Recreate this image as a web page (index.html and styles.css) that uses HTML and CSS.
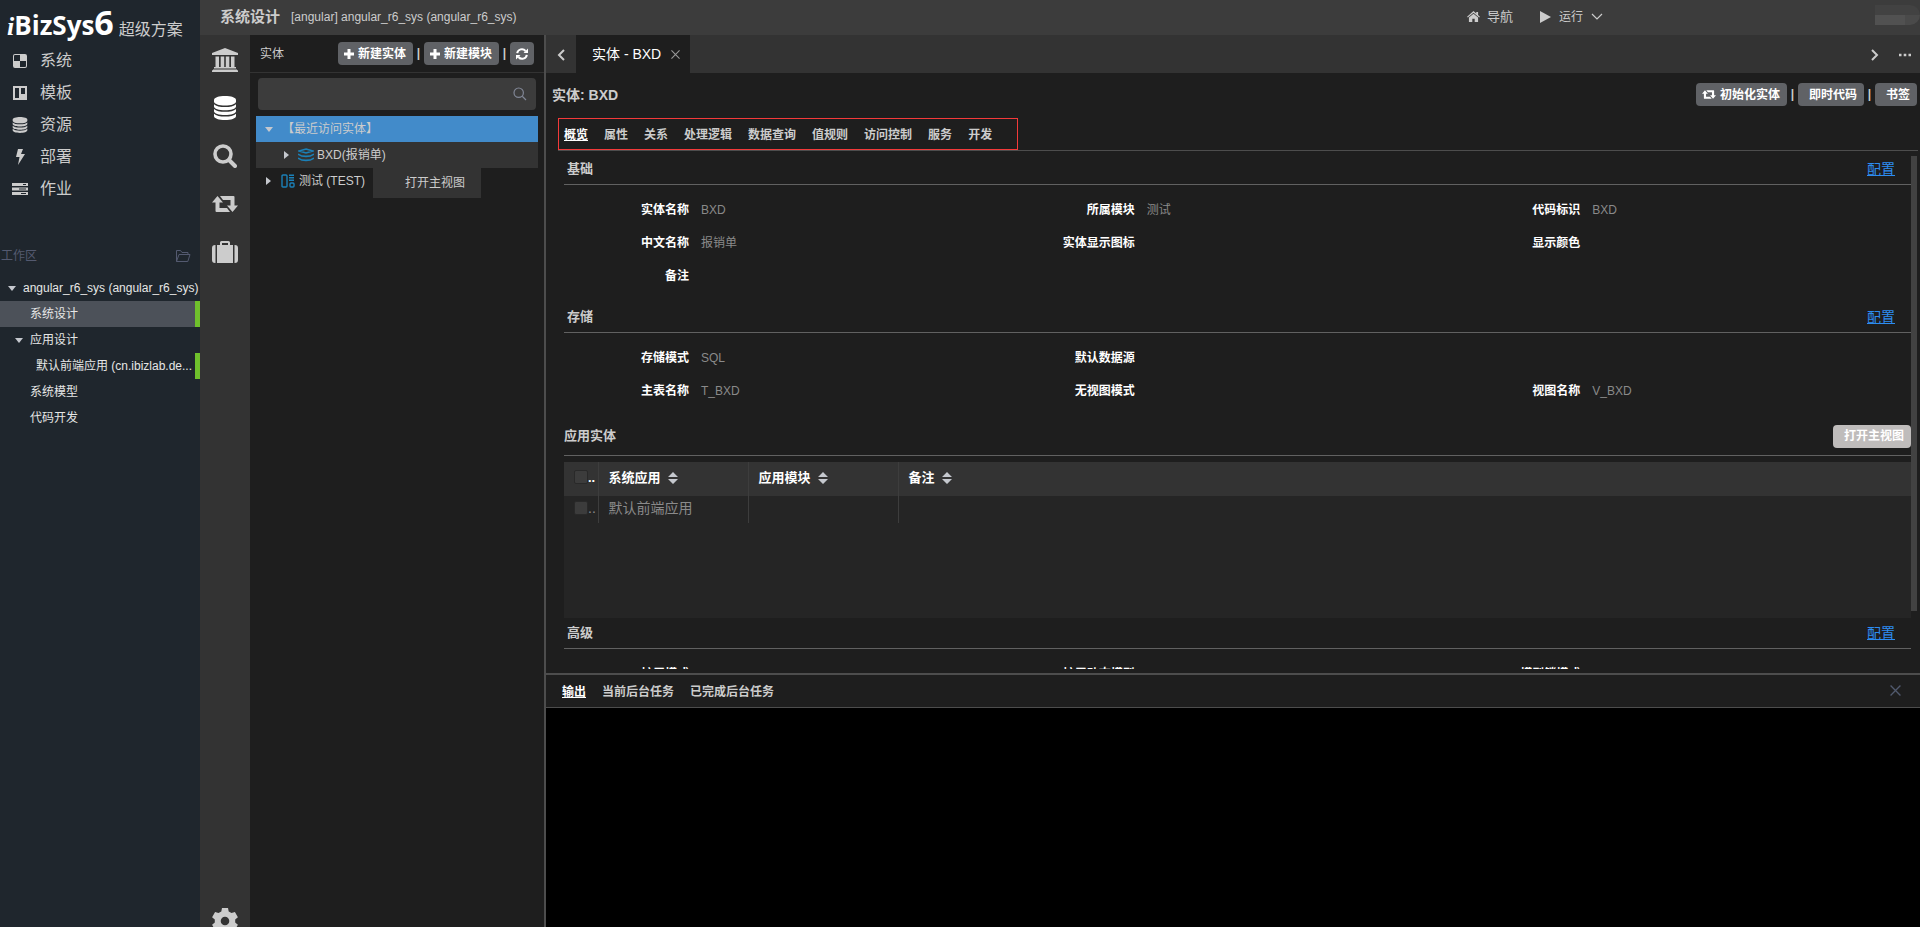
FILE: index.html
```html
<!DOCTYPE html>
<html lang="zh-CN">
<head>
<meta charset="utf-8">
<title>系统设计 - iBizSys6</title>
<link rel="stylesheet" href="styles.css">
</head>
<body>
<svg class="sprite" aria-hidden="true">
  <symbol id="retweet" viewBox="0 0 26 16"><path d="M5.5 0 11 6.500H7.500V12H15l3 4H4.500Q3.500 16 3.500 15V6.500H0ZM20.500 16 15 9.500h3.500V4H11L8 0h13.500q1 0 1 1v8.500H26Z"/></symbol>
  <symbol id="database" viewBox="0 0 22 24"><path d="M0 4C0 1.500 5 0 11 0s11 1.500 11 4v1.500C22 8 17 9.500 11 9.500S0 8 0 5.500Z"/><path d="M0 8.200c2 2 6 2.800 11 2.800s9-.8 11-2.800v2.300c0 2.400-5 3.800-11 3.800S0 12.900 0 10.500Z"/><path d="M0 13c2 2 6 2.800 11 2.800s9-.8 11-2.800v2.300c0 2.400-5 3.800-11 3.800S0 17.700 0 15.300Z"/><path d="M0 17.800c2 2 6 2.800 11 2.800s9-.8 11-2.800v2.200c0 2.500-5 4-11 4S0 22.500 0 20Z"/></symbol>
  <symbol id="plus" viewBox="0 0 10 10"><path d="M3.500 0h3v3.500H10v3H6.500V10h-3V6.500H0v-3h3.500Z"/></symbol>
  <symbol id="close" viewBox="0 0 10 10"><path d="m.5.5 9 9m0-9-9 9" fill="none" stroke="currentColor" stroke-width="1.200"/></symbol>
  <symbol id="sort" viewBox="0 0 10 12"><path d="M5 0 10 5H0ZM5 12 0 7h10Z"/></symbol>
</svg>
<div class="app">
  <aside class="sidebar">
    <div class="logo"><span class="logo-i">i</span><span class="logo-name">BizSys</span><span class="logo-six">6</span><span class="logo-edition">超级方案</span></div>
    <nav class="main-nav">
      <a href="#"><svg viewBox="0 0 16 16" width="16" height="16"><path fill-rule="evenodd" d="M3 1h10q2 0 2 2v10q0 2-2 2H3q-2 0-2-2V3q0-2 2-2Zm5 1H3Q2 2 2 3v5h6v6h5q1 0 1-1V8H8Z"/></svg>系统</a>
      <a href="#"><svg viewBox="0 0 16 16" width="16" height="16"><path fill-rule="evenodd" d="M1 1h14v14H1Zm2 2v10h4V3Zm6 0v6h4V3Z"/></svg>模板</a>
      <a href="#"><svg width="16" height="16"><use href="#database"/></svg>资源</a>
      <a href="#"><svg viewBox="0 0 16 16" width="16" height="16"><path d="M6 0h5L9 5h4L6 16l1.500-8H4Z"/></svg>部署</a>
      <a href="#"><svg viewBox="0 0 16 14" width="16" height="14"><path fill-rule="evenodd" d="M0 1h16v3H0Zm11 1v1h3V2ZM0 5.500h16v3H0Zm7 1v1h7v-1ZM0 10h16v3H0Zm9 1v1h5v-1Z"/></svg>作业</a>
    </nav>
    <div class="workspace-head"><span>工作区</span><svg viewBox="0 0 16 14" width="16" height="14"><path d="M1.500 12.500v-11h4l1.500 2h6v2M1.500 12.500 4 5.500h11l-2.200 7Z" fill="none" stroke="currentColor"/></svg></div>
    <ul class="ws-tree">
      <li class="root"><i class="caret-down"></i>angular_r6_sys (angular_r6_sys)</li>
      <li class="active marked">系统设计</li>
      <li class="open"><i class="caret-down"></i>应用设计</li>
      <li class="leaf marked"><span>默认前端应用 (cn.ibizlab.de...</span></li>
      <li>系统模型</li>
      <li>代码开发</li>
    </ul>
  </aside>
  <div class="workbench">
    <header class="topbar">
      <h1>系统设计</h1><span class="sys-name">[angular] angular_r6_sys (angular_r6_sys)</span>
      <nav class="top-nav">
        <a href="#"><svg viewBox="0 0 14 12" width="13" height="11"><path d="M7 0 10 2.600V1h2v3.400L14 6.200l-.8 1L7 1.900.8 7.200 0 6.200ZM7 3l5 4.200V12H8.300V8.500H5.700V12H2V7.200Z"/></svg>导航</a>
        <a href="#" class="run"><svg viewBox="0 0 12 12" width="12" height="12"><path d="M1 0 12 6 1 12Z"/></svg><span>运行</span><svg viewBox="0 0 12 8" width="12" height="8"><path d="m1 1 5 5 5-5" fill="none" stroke="currentColor" stroke-width="1.200"/></svg></a>
      </nav>
      <div class="user"><i></i><i></i><i></i><i></i><i></i><i></i></div>
    </header>
    <div class="body">
      <nav class="rail">
        <button aria-label="系统"><svg viewBox="0 0 26 24" width="26" height="24"><path d="M13 0 26 5v2H0V5ZM3.500 8.500H7V19h1.700V8.500h3.500V19h1.600V8.500h3.500V19H19V8.500h3.500V19H24v1.500H2V19h1.500ZM1 21.500h24V22l1 .5V24H0v-1.500l1-.5Z"/></svg></button>
        <button aria-label="实体" class="on"><svg width="22" height="24"><use href="#database"/></svg></button>
        <button aria-label="搜索"><svg viewBox="0 0 24 24" width="24" height="24"><g fill="none" stroke="currentColor"><circle cx="10" cy="10" r="8" stroke-width="3.600"/><path d="m16 16 6 6" stroke-width="4" stroke-linecap="round"/></g></svg></button>
        <button aria-label="转换"><svg width="26" height="16"><use href="#retweet"/></svg></button>
        <button aria-label="资源"><svg viewBox="0 0 26 22" width="26" height="22"><path fill-rule="evenodd" d="M3.500 4v18H3q-3 0-3-3V7q0-3 3-3ZM5 4h3V1.500Q8 0 9.500 0h7Q18 0 18 1.500V4h3v18H5Zm5 0h6V2h-6ZM22.500 4h.5q3 0 3 3v12q0 3-3 3h-.5Z"/></svg></button>
        <button aria-label="设置" class="gear"><svg viewBox="0 0 26 26" width="26" height="26"><path fill-rule="evenodd" d="M10 0h6l.7 3.500 2.800 1.600L22.900 4l3 5.200-2.700 2.300v3l2.700 2.300-3 5.200-3.400-1.100-2.800 1.600L16 26h-6l-.7-3.500-2.800-1.600L3.100 22l-3-5.200 2.700-2.300v-3L.1 9.200l3-5.200 3.400 1.100 2.800-1.600ZM13 8.700a4.300 4.300 0 1 0 0 8.600 4.300 4.300 0 0 0 0-8.600Z"/></svg></button>
      </nav>
      <section class="explorer">
        <div class="explorer-head">
          <span>实体</span>
          <div class="tools">
            <button class="btn"><svg width="10" height="10"><use href="#plus"/></svg>新建实体</button><span class="bar">|</span>
            <button class="btn"><svg width="10" height="10"><use href="#plus"/></svg>新建模块</button><span class="bar">|</span>
            <button class="btn icon-only" aria-label="刷新"><svg viewBox="0 0 12 12" width="12" height="12"><path d="M1.200 5.200A4.700 4.700 0 0 1 9.500 3M10.800 6.800A4.700 4.700 0 0 1 2.500 9" fill="none" stroke="currentColor" stroke-width="2"/><path d="M12 .5V5H7.500ZM0 11.500V7h4.500Z"/></svg></button>
          </div>
        </div>
        <label class="search"><input type="text" aria-label="搜索实体"><svg viewBox="0 0 14 14" width="14" height="14"><path d="M9.500 9.500 13 13M5.700 10.400a4.700 4.700 0 1 0 0-9.400 4.700 4.700 0 0 0 0 9.400Z" fill="none" stroke="currentColor" stroke-width="1.200"/></svg></label>
        <ul class="tree">
          <li class="recent"><i class="caret-down"></i><span>【最近访问实体】</span></li>
          <li class="hover"><i class="caret-right"></i><svg class="blue" viewBox="0 0 16 14" width="16" height="14"><path d="M8 1 15 3 8 5 1 3ZM0 6q3 2.400 8 2.400T16 6M0 10q3 2.400 8 2.400t8-2.400" fill="none" stroke="currentColor" stroke-width="1.600"/></svg><span>BXD(报销单)</span></li>
          <li><i class="caret-right"></i><svg class="blue" viewBox="0 0 14 14" width="14" height="14"><path d="M2 1h3q1 0 1 1v10q0 1-1 1H2q-1 0-1-1V2q0-1 1-1ZM8 1.200h5M8 3.700h5M8 6.200h5M10 9h2q1 0 1 1v2q0 1-1 1h-2q-1 0-1-1v-2q0-1 1-1Z" fill="none" stroke="currentColor" stroke-width="1.400"/></svg><span>测试 (TEST)</span></li>
        </ul>
        <div class="context-menu" role="menu"><a href="#" role="menuitem">打开主视图</a></div>
      </section>
      <main class="editor">
        <div class="tabbar">
          <button class="arrow" aria-label="向左"><svg viewBox="0 0 8 12" width="8" height="12"><path d="M7 1 2 6l5 5" fill="none" stroke="currentColor" stroke-width="2"/></svg></button>
          <div class="tab">实体 - BXD<button aria-label="关闭"><svg width="9" height="9"><use href="#close"/></svg></button></div>
          <div class="tab-actions">
            <button aria-label="向右"><svg viewBox="0 0 8 12" width="8" height="12"><path d="m1 1 5 5-5 5" fill="none" stroke="currentColor" stroke-width="2"/></svg></button>
            <button aria-label="更多"><svg viewBox="0 0 12 4" width="12" height="4"><path d="M0 .8h2.500v2.400H0ZM4.700.8h2.600v2.400H4.700ZM9.500.8H12v2.400H9.500Z"/></svg></button>
          </div>
        </div>
        <div class="title-row">
          <h2>实体: BXD</h2>
          <div class="tools">
            <button class="btn"><svg width="14" height="9"><use href="#retweet"/></svg>初始化实体</button><span class="bar">|</span>
            <button class="btn text">即时代码</button><span class="bar">|</span>
            <button class="btn text">书签</button>
          </div>
        </div>
        <div class="subtabs">
          <nav class="subtab-box">
            <a href="#" class="on">概览</a><a href="#">属性</a><a href="#">关系</a><a href="#">处理逻辑</a><a href="#">数据查询</a><a href="#">值规则</a><a href="#">访问控制</a><a href="#">服务</a><a href="#">开发</a>
          </nav>
        </div>
        <div class="scroll">
          <div class="content">
            <div class="section-head"><h3>基础</h3><a href="#">配置</a></div>
            <dl class="form">
              <div><dt>实体名称</dt><dd>BXD</dd></div><div><dt>所属模块</dt><dd>测试</dd></div><div><dt>代码标识</dt><dd>BXD</dd></div>
              <div><dt>中文名称</dt><dd>报销单</dd></div><div><dt>实体显示图标</dt><dd></dd></div><div><dt>显示颜色</dt><dd></dd></div>
              <div><dt>备注</dt><dd></dd></div>
            </dl>
            <div class="section-head"><h3>存储</h3><a href="#">配置</a></div>
            <dl class="form">
              <div><dt>存储模式</dt><dd>SQL</dd></div><div><dt>默认数据源</dt><dd></dd></div><div></div>
              <div><dt>主表名称</dt><dd>T_BXD</dd></div><div><dt>无视图模式</dt><dd></dd></div><div><dt>视图名称</dt><dd>V_BXD</dd></div>
            </dl>
            <div class="grid-head"><h3>应用实体</h3><button class="btn text light">打开主视图</button></div>
            <div class="grid">
              <table>
                <colgroup><col class="c-check"><col class="c-mid"><col class="c-mid"><col></colgroup>
                <thead><tr><th><input type="checkbox" aria-label="全选">..</th><th>系统应用<svg width="10" height="12"><use href="#sort"/></svg></th><th>应用模块<svg width="10" height="12"><use href="#sort"/></svg></th><th>备注<svg width="10" height="12"><use href="#sort"/></svg></th></tr></thead>
                <tbody><tr><td><input type="checkbox" aria-label="选择">..</td><td>默认前端应用</td><td></td><td></td></tr></tbody>
              </table>
            </div>
            <div class="section-head"><h3>高级</h3><a href="#">配置</a></div>
            <dl class="form">
              <div><dt>扩展模式</dt><dd></dd></div><div><dt>扩展动态模型</dt><dd></dd></div><div><dt>模型锁模式</dt><dd></dd></div>
            </dl>
          </div>
          <div class="scrollbar"></div>
        </div>
        <section class="output">
          <div class="output-head">
            <a href="#" class="on">输出</a><a href="#">当前后台任务</a><a href="#">已完成后台任务</a>
            <button aria-label="关闭"><svg width="11" height="11"><use href="#close"/></svg></button>
          </div>
          <div class="console"></div>
        </section>
      </main>
    </div>
  </div>
</div>
</body>
</html>
```

FILE: styles.css
```css
* { box-sizing: border-box; }
body { margin: 0; font: 12px/18px "Liberation Sans", "Noto Sans CJK SC", sans-serif; color: #ccc; background: #1e1e1e; }
h1, h2, h3, ul, dl, dd { margin: 0; padding: 0; }
ul { list-style: none; }
a { color: inherit; text-decoration: none; }
button { margin: 0; padding: 0; border: 0; background: none; color: inherit; font: inherit; }
svg { fill: currentColor; flex: none; }
.sprite { display: none; }

.app { display: flex; height: 100vh; overflow: hidden; }
.sidebar { width: 200px; flex: none; background: #1f262d; }
.workbench { flex: 1; min-width: 0; display: flex; flex-direction: column; }

.logo { display: flex; align-items: baseline; height: 45px; padding-left: 7px; color: #fff; line-height: 40px; white-space: nowrap; }
.logo-i { font: italic bold 26px/40px "Liberation Serif", serif; }
.logo-name { font: bold 26px/40px "Open Sans", sans-serif; }
.logo-six { font: bold 34px/44px "Open Sans", sans-serif; }
.logo-edition { margin-left: 5px; font-size: 16px; color: #ccc; }
.main-nav a { display: flex; align-items: center; gap: 12px; height: 32px; padding-left: 12px; font-size: 16px; }
.workspace-head { display: flex; align-items: center; justify-content: space-between; height: 30px; margin-top: 36px; padding: 0 9px 0 1px; color: #545a70; }
.ws-tree { margin-top: 4px; color: #e6e6e6; }
.ws-tree li { display: flex; align-items: center; height: 26px; padding-left: 30px; white-space: nowrap; border-right: 5px solid transparent; }
.ws-tree .root { padding-left: 8px; gap: 7px; border: 0; }
.ws-tree .open { padding-left: 14px; gap: 7px; }
.ws-tree .leaf { padding-left: 36px; }
.ws-tree .active { background: #4c5159; }
.ws-tree .marked { border-right-color: #6fc02c; }
.caret-down { flex: none; border: 4px solid transparent; border-top: 5px solid #c5c8ce; border-bottom: 0; }
.caret-right { flex: none; border: 4px solid transparent; border-left: 5px solid #c5c8ce; border-right: 0; }
.ws-tree .open .caret-down { margin-left: 1px; }

.topbar { display: flex; align-items: center; height: 35px; flex: none; padding: 0 0 2px 20px; background: #3c3c3c; }
.topbar h1 { font-size: 15px; line-height: 20px; }
.sys-name { margin-left: 11px; white-space: nowrap; }
.top-nav { display: flex; gap: 26px; margin-left: auto; margin-right: 272px; font-size: 13px; }
.top-nav a { display: flex; align-items: center; gap: 7px; }
.top-nav .run { font-size: 12px; gap: 8px; }
.user { display: grid; grid-template-columns: repeat(3, 15px); grid-auto-rows: 10px; align-self: flex-start; margin-top: 5px; border-radius: 0 10px 10px 0; overflow: hidden; }
.user i { background: #424242; }
.user i:nth-child(n+4) { background: #515151; }
.user i:nth-child(6) { background: #4a4a4a; }

.body { flex: 1; min-height: 0; display: flex; }
.rail { display: flex; flex-direction: column; width: 50px; flex: none; padding-top: 1px; background: #333; color: #ccc; }
.rail button { display: flex; align-items: center; justify-content: center; height: 48px; flex: none; }
.rail .on { color: #fff; }
.rail .gear { height: 26px; margin-top: auto; margin-bottom: -7px; }

.explorer { position: relative; width: 294px; flex: none; }
.explorer-head { display: flex; align-items: center; justify-content: space-between; height: 38px; padding: 0 10px; border-bottom: 1px solid #333; }
.tools { display: flex; align-items: center; }
.btn { display: flex; align-items: center; gap: 4px; height: 23px; padding: 0 7px 0 6px; border-radius: 4px; background: #606266; color: #fff; font-weight: bold; white-space: nowrap; }
.btn.text { padding-left: 11px; }
.btn.icon-only { padding: 0 6px; }
.btn.light { background: #bfbcbb; }
.bar { width: 11px; height: 20px; text-align: center; font-weight: bold; }
.search { display: flex; align-items: center; height: 32px; margin: 5px 8px 0; padding-right: 9px; border-radius: 4px; background: #3c3c3c; color: #808695; }
.search input { flex: 1; min-width: 0; height: 30px; border: 0; outline: 0; background: none; color: #ccc; padding: 0 8px; }
.tree { margin: 6px 6px 0; }
.tree li { display: flex; align-items: center; gap: 4px; height: 26px; padding-left: 10px; }
.tree .caret-right { margin-right: 6px; }
.tree .recent { background: #428bca; padding-left: 9px; gap: 9px; }
.tree .hover { background: #333; padding-left: 28px; gap: 3px; }
.blue { color: #1b80b8; }
.context-menu { position: absolute; left: 123px; top: 133px; width: 108px; padding: 6px 0 6px 32px; background: #333; }

.editor { flex: 1; min-width: 0; display: flex; flex-direction: column; border-left: 2px solid #4d4d4d; }
.tabbar { display: flex; height: 38px; flex: none; background: #333; }
.arrow { display: flex; align-items: center; justify-content: center; width: 30px; padding-top: 2px; }
.tab { display: flex; align-items: center; gap: 10px; padding: 0 10px 0 16px; background: #1e1e1e; color: #fff; font-size: 14px; }
.tab button { display: flex; color: #999; }
.tab-actions { display: flex; align-items: center; gap: 20px; margin-left: auto; padding: 2px 9px 0 0; }
.tab-actions button { display: flex; }
.title-row { display: flex; align-items: center; justify-content: space-between; height: 43px; flex: none; padding: 0 3px 0 6px; }
.title-row h2 { font-size: 14px; }
.subtabs { flex: none; margin: 2px 2px 0 12px; border-bottom: 1px solid #4d4d4d; }
.subtab-box { display: flex; align-items: center; gap: 16px; width: 460px; height: 32px; padding: 2px 0 0 5px; border: 1px solid #f33a3a; font-weight: bold; white-space: nowrap; }
.subtab-box .on, .output-head .on { color: #fff; text-decoration: underline; }

.scroll { flex: 1; min-height: 0; display: flex; margin: 3px 3px 4px 18px; overflow: hidden; }
.content { flex: 1; min-width: 0; }
.scrollbar { width: 6px; height: 455px; margin-top: 2px; background: #424242; }
.section-head { display: flex; align-items: center; justify-content: space-between; height: 31px; padding: 0 16px 0 3px; border-bottom: 1px solid #616161; }
.section-head h3, .grid-head h3 { font-size: 13px; }
.section-head a { color: #2d8cf0; font-size: 14px; text-decoration: underline; }
.form { display: grid; grid-template-columns: repeat(3, 1fr); padding: 8px 5px 10px; }
.form div { display: flex; align-items: center; height: 33px; }
.form dt { width: 120px; text-align: right; font-weight: bold; color: #fff; }
.form dd { margin-left: 12px; color: #8a8a8a; }
.grid-head { display: flex; align-items: center; justify-content: space-between; height: 39px; border-bottom: 1px solid #616161; }
.grid { height: 156px; margin-top: 6px; background: #252525; }
table { width: 100%; table-layout: fixed; border-collapse: collapse; font-size: 14px; }
.c-check { width: 34px; }
.c-mid { width: 150px; }
th, td { padding: 0 10px 2px; text-align: left; border-right: 1px solid #3d3d3d; white-space: nowrap; }
th:last-child, td:last-child { border-right: 0; }
th:first-child, td:first-child { padding-right: 0; }
th { height: 34px; background: #333; color: #fff; font-size: 13px; }
th svg { margin-left: 7px; vertical-align: -2px; color: #c5c8ce; }
td { height: 27px; padding-bottom: 4px; color: #8a8a8a; }
input[type="checkbox"] { appearance: none; width: 14px; height: 14px; margin: 0; border: 1px solid #292929; border-radius: 2px; background: #3c3c3c; vertical-align: -2px; }

.output { flex: none; height: 254px; display: flex; flex-direction: column; border-top: 2px solid #4d4d4d; }
.output-head { display: flex; align-items: center; gap: 16px; height: 33px; flex: none; padding: 2px 19px 0 16px; border-bottom: 1px solid #4d4d4d; font-weight: bold; }
.output-head button { display: flex; margin: 0 0 4px auto; color: #515a6e; }
.console { flex: 1; background: #000; }
```
